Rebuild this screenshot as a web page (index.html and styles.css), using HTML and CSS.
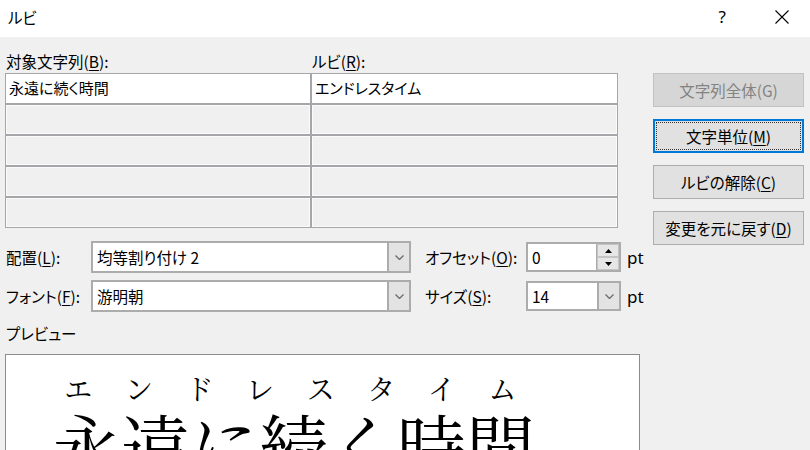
FILE: index.html
```html
<!DOCTYPE html>
<html lang="ja">
<head>
<meta charset="utf-8">
<title>ルビ</title>
<link rel="stylesheet" href="styles.css">
</head>
<body>
<div class="window">
  <div class="titlebar">
    <span class="title">ルビ</span>
    <span class="help">?</span>
    <span class="close"><svg width="14" height="14" viewBox="0 0 14 14"><path d="M0.5 0.5L13.5 13.5M13.5 0.5L0.5 13.5" stroke="#000" stroke-width="1.1" fill="none"/></svg></span>
  </div>
  <div class="content">
    <div class="left">
      <div class="heads">
        <span>対象文字列(<u>B</u>):</span>
        <span class="head-r">ルビ(<u>R</u>):</span>
      </div>
      <div class="grid">
        <div class="cell active">永遠に続く時間</div>
        <div class="cell active">エンドレスタイム</div>
        <div class="cell"></div><div class="cell"></div>
        <div class="cell"></div><div class="cell"></div>
        <div class="cell"></div><div class="cell"></div>
        <div class="cell"></div><div class="cell"></div>
      </div>
      <div class="options">
        <span class="lbl">配置(<u>L</u>):</span>
        <div class="combo">
          <span class="val">均等割り付け 2</span>
          <span class="drop"><svg width="9" height="5" viewBox="0 0 9 5"><path d="M0.5 0.5L4.5 4.5L8.5 0.5" stroke="#6a6a6a" stroke-width="1.3" fill="none"/></svg></span>
        </div>
        <span class="lbl lbl2">オフセット(<u>O</u>):</span>
        <div class="combo small">
          <span class="val">0</span>
          <span class="spin">
            <span class="spin-btn"><svg width="7" height="4" viewBox="0 0 7 4"><polygon points="0,4 3.5,0 7,4" fill="#000"/></svg></span>
            <span class="spin-btn"><svg width="7" height="4" viewBox="0 0 7 4"><polygon points="0,0 3.5,4 7,0" fill="#000"/></svg></span>
          </span>
        </div>
        <span class="unit">pt</span>

        <span class="lbl">フォント(<u>F</u>):</span>
        <div class="combo">
          <span class="val">游明朝</span>
          <span class="drop"><svg width="9" height="5" viewBox="0 0 9 5"><path d="M0.5 0.5L4.5 4.5L8.5 0.5" stroke="#6a6a6a" stroke-width="1.3" fill="none"/></svg></span>
        </div>
        <span class="lbl lbl2">サイズ(<u>S</u>):</span>
        <div class="combo small">
          <span class="val">14</span>
          <span class="drop"><svg width="9" height="5" viewBox="0 0 9 5"><path d="M0.5 0.5L4.5 4.5L8.5 0.5" stroke="#6a6a6a" stroke-width="1.3" fill="none"/></svg></span>
        </div>
        <span class="unit">pt</span>
      </div>
      <div class="preview-label">プレビュー</div>
      <div class="preview">
        <div class="ruby"><span>エ</span><span>ン</span><span>ド</span><span>レ</span><span>ス</span><span>タ</span><span>イ</span><span>ム</span></div>
        <div class="base">永遠に続く時間</div>
      </div>
    </div>
    <div class="right">
      <button class="btn disabled">文字列全体(G)</button>
      <button class="btn focused"><span class="focus-ring">文字単位(<u>M</u>)</span></button>
      <button class="btn">ルビの解除(<u>C</u>)</button>
      <button class="btn">変更を元に戻す(<u>D</u>)</button>
    </div>
  </div>
</div>
</body>
</html>
```

FILE: styles.css
```css
html, body {
  margin: 0;
  padding: 0;
}
body {
  width: 810px;
  height: 450px;
  overflow: hidden;
  background: #f0f0f0;
  font-family: "Noto Sans CJK JP", "Noto Sans", sans-serif;
  font-size: 15.5px;
  color: #000;
  font-feature-settings: "palt";
}
u {
  text-decoration: underline;
  text-underline-offset: 2px;
  text-decoration-thickness: 1px;
}
.window {
  width: 810px;
  height: 450px;
}
.titlebar {
  height: 37px;
  background: #fff;
  display: flex;
  align-items: center;
  padding-left: 8px;
  box-sizing: border-box;
}
.title {
  font-size: 15.5px;
  line-height: 20px;
  margin-top: -4px;
}
.help {
  margin-left: auto;
  margin-right: 49px;
  font-size: 17px;
  line-height: 20px;
  margin-top: -4px;
  font-family: "Noto Sans", sans-serif;
}
.close {
  margin-right: 21px;
  display: flex;
  margin-top: -4px;
}
.content {
  display: flex;
  padding-left: 5px;
}
.left {
  width: 635px;
}
.heads {
  display: grid;
  grid-template-columns: 306px 307px;
  height: 36px;
  box-sizing: border-box;
  padding-top: 14px;
  line-height: 20px;
}
.heads span {
  padding-left: 1px;
}
.head-r {
  padding-left: 2px;
}
.grid {
  display: grid;
  grid-template-columns: 306px 307px;
  grid-auto-rows: 31px;
  width: 613px;
}
.cell {
  box-sizing: border-box;
  border: 1px solid #a6a6aa;
  background: #f0f0f0;
  box-shadow: inset 0 0 0 1px #fbfbfb;
  padding-left: 3px;
  line-height: 28px;
  font-size: 15px;
}
.cell.active {
  background: #fff;
  box-shadow: none;
}
.options {
  margin-top: 13px;
  display: grid;
  grid-template-columns: 86px 320px 115px 95px auto;
  grid-template-rows: 32px 32px;
  row-gap: 7px;
  align-items: center;
}
.lbl {
  padding-left: 1px;
  line-height: 20px;
  white-space: nowrap;
}
.lbl2 {
  padding-left: 14px;
}
.combo {
  box-sizing: border-box;
  height: 32px;
  border: 2px solid #acacac;
  background: #fff;
  display: flex;
  align-items: stretch;
}
.combo.small {
  height: 30px;
}
.val {
  flex: 1;
  padding-left: 4px;
  display: flex;
  align-items: center;
}
.drop {
  width: 20px;
  background: #e3e3e3;
  border-left: 2px solid #acacac;
  display: flex;
  align-items: center;
  justify-content: center;
}
.spin {
  width: 22px;
  display: flex;
  flex-direction: column;
  border-left: 1px solid #acacac;
}
.spin-btn {
  flex: 1;
  background: #e6e6e6;
  border: 1px solid #c4c4c4;
  display: flex;
  align-items: center;
  justify-content: center;
}
.unit {
  margin-left: 6px;
  font-family: "Noto Sans", sans-serif;
  font-size: 17px;
}
.preview-label {
  margin-top: 11px;
  line-height: 20px;
  padding-left: 1px;
}
.preview {
  margin-top: 11px;
  height: 120px;
  box-sizing: border-box;
  border: 1px solid #8c8c8c;
  background: #fff;
  padding-top: 19px;
  font-family: "Noto Serif CJK JP", "Noto Sans CJK JP", serif;
  font-weight: 400;
  font-feature-settings: normal;
}
.ruby {
  display: flex;
  padding-left: 42px;
  font-size: 28px;
  line-height: 28px;
}
.ruby span {
  width: 60.6px;
  text-align: center;
}
.base {
  margin-top: 8px;
  padding-left: 46px;
  font-size: 69px;
  line-height: 68px;
  white-space: nowrap;
}
.right {
  margin-left: 13px;
  width: 151px;
  padding-top: 36px;
  display: flex;
  flex-direction: column;
  gap: 12px;
}
.btn {
  height: 34px;
  box-sizing: border-box;
  border: 1px solid #adadad;
  background: #e1e1e1;
  font-family: inherit;
  font-size: 15.5px;
  color: #000;
  padding: 0;
  font-feature-settings: "palt";
  display: flex;
  align-items: center;
  justify-content: center;
}
.btn.disabled {
  background: #d6d6d6;
  border-color: #c2c2c2;
  color: #838383;
}
.btn.focused {
  border: 2px solid #0078d7;
  padding: 1px;
}
.focus-ring {
  flex: 1;
  align-self: stretch;
  display: flex;
  align-items: center;
  justify-content: center;
  border: 1px dotted #333;
}
```
